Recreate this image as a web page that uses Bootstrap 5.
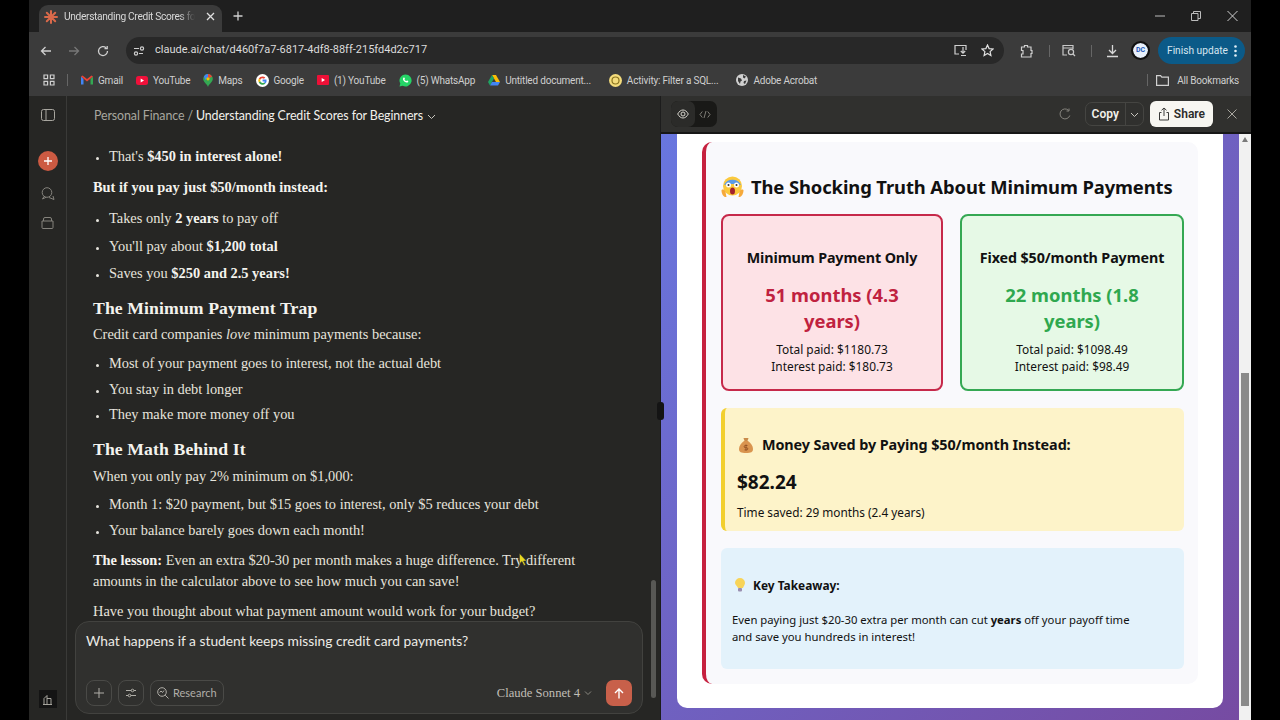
<!DOCTYPE html>
<html lang="en">
<head>
    <meta charset="UTF-8">
    <title>Understanding Credit Scores for Beginners</title>
    <link href="https://cdn.jsdelivr.net/npm/bootstrap@5.3.0/dist/css/bootstrap.min.css" rel="stylesheet">
    <style>
        html, body { height: 720px; overflow: hidden; background: #000; }
        .browser-win { width: 1222px; height: 720px; margin-left: 29px; background: #3b3b3b; font-family: Roboto, sans-serif; position: relative; }
        svg { display: block; flex: none; }

        .tab-strip { height: 32px; background: #1f1f1f; padding-left: 10px; }
        .tab-active { width: 183px; height: 27px; margin-top: 5px; background: #3b3b3b; border-radius: 9px 9px 0 0; padding: 0 7px 4px 5px; color: #d8d8d8; font-size: 10.2px; letter-spacing: -.33px; }
        .tab-title { width: 131px; margin-left: 6px; white-space: nowrap; -webkit-mask-image: linear-gradient(90deg, #000 88%, transparent); mask-image: linear-gradient(90deg, #000 88%, transparent); }
        .win-btns { gap: 26px; padding-right: 13px; }

        .tool-bar { height: 36px; background: #3b3b3b; padding: 1px 6px 0 11px; }
        .omni-box { width: 878px; height: 27px; margin-left: 17px; background: #282828; border-radius: 14px; padding: 0 10px 0 7px; color: #dcdcdc; font-size: 11px; }
        .omni-url { margin-left: 10px; }
        .update-pill { width: 87px; height: 27px; margin-left: 10px; background: #0b5a88; border-radius: 14px; color: #d7e6f0; font-size: 10.2px; padding-left: 9px; }
        .avatar-dc { width: 15px; height: 15px; margin-left: 14px; border-radius: 50%; background: #e8f0fb; color: #1a56b8; font-size: 7px; font-weight: 700; outline: 2px solid #111; }
        .tool-sep { width: 1px; height: 12px; background: #666; }
        .tb-12 { margin-left: 12px; }
        .tb-13 { margin-left: 13px; }
        .tb-14 { margin-left: 14px; }
        .tb-15 { margin-left: 15px; }
        .tb-17 { margin-left: 17px; }

        .mark-bar { height: 28px; background: #3b3b3b; padding: 0 0 4px 14px; color: #cfcfcf; font-size: 10px; letter-spacing: -.2px; }
        .mark-sep { margin: 0 13px 0 12px; }
        .mark-item { white-space: nowrap; gap: 5px; }
        .mark-item + .mark-item { margin-left: 13px; }
        .mark-item + .mark-far { margin-left: 18px; }
        .mark-end { padding-right: 12px; }

        .app-body { height: 624px; }
        .side-rail { width: 38px; background: #262624; border-right: 1px solid #3a3a38; padding-top: 13px; }
        .new-chat { width: 20px; height: 20px; border-radius: 50%; background: #cc5a42; margin-top: 30px; }
        .rail-foot { width: 18px; height: 18px; background: #141414; margin-top: auto; margin-bottom: 12px; }

        .chat-col { width: 593px; background: #262624; position: relative; }
        .chat-head { height: 38px; padding: 2px 0 0 27px; font-size: 12.4px; color: #f2f1ec; font-family: Lato, sans-serif; letter-spacing: -.1px; }
        .crumb-dim { color: #a8a69f; }
        .crumb-slash { margin: 0 3px; }
        .chat-text { height: 487px; overflow: hidden; padding: 12px 0 0 26px; color: #e6e4dd; font-family: "Liberation Serif", serif; font-size: 14.4px; line-height: 20px; }
        .chat-text p, .chat-text ul { margin: 0; }
        .chat-text b { color: #f4f3ee; }
        .chat-text ul { padding-left: 16px; }
        .chat-text li::marker { font-size: 11px; }
        .chat-text li + li { margin-top: 7.5px; }
        .chat-text ul.tight li + li { margin-top: 5.5px; }
        .chat-text h3 { font-family: "Liberation Serif", serif; font-size: 17.7px; font-weight: 700; line-height: 24px; margin: 13px 0 4px; color: #f4f3ee; letter-spacing: .1px; }
        .gap-a { margin-top: 11px !important; }
        .gap-b { margin-top: 9px !important; }
        .gap-c { margin-top: 8px !important; }
        .gap-d { margin-top: 10px !important; }
        .gap-e { margin-top: 5px !important; }
        .two-line { line-height: 21px; }
        .chat-bar { position: absolute; left: 584px; top: 484px; width: 5px; height: 118px; background: #585855; border-radius: 3px; }
        .prompt-box { width: 568px; height: 93px; margin-left: 8px; background: #30302e; border: 1px solid #42423f; border-radius: 14px; padding: 9px 10px 7px 10px; color: #ecebe6; font-family: Lato, sans-serif; font-size: 13.8px; }
        .prompt-tools { gap: 6px; }
        .mini-btn { height: 26px; border: 1px solid #4a4a47; border-radius: 8px; color: #b0aea8; font-size: 11px; padding: 0 6px; }
        .send-btn { width: 26px; height: 26px; background: #c8604a; border-radius: 7px; }
        .model-pick { color: #c0beb6; font-family: "Liberation Serif", serif; font-size: 12.6px; margin-right: 8px; }

        .art-col { width: 591px; border-left: 1px solid #1c1c1c; }
        .art-head { height: 38px; background: #30302e; border-bottom: 2px solid #171717; padding: 0 14px 0 10px; color: #f0efea; font-size: 12px; font-weight: 600; }
        .view-switch { width: 46px; height: 26px; background: #191917; border-radius: 7px; }
        .view-on { width: 24px; height: 26px; background: #2b2b29; border-radius: 7px; }
        .copy-split { height: 24px; border: 1px solid #454542; border-radius: 7px; }
        .copy-part { padding: 0 6px; height: 100%; border-right: 1px solid #454542; }
        .share-btn { height: 26px; background: #f7f6f1; color: #2b2b29; border-radius: 6px; padding: 0 8px; margin-left: 6px; }

        .art-view { height: 586px; }
        .art-scroll { width: 578px; background: linear-gradient(135deg, #667eea, #764ba2); background-size: 100% 135%; background-position: bottom; padding: 0 16px 12px 16px; }
        .white-sheet { height: 574px; background: #fff; border-radius: 0 0 10px 10px; padding: 8px 25px 24px 25px; font-family: "Noto Sans", sans-serif; color: #111; }
        .truth-box { height: 542px; background: #f9f9fc; border-left: 4px solid #c6213f; border-radius: 10px; padding: 31px 14px 0 15px; }
        .truth-title { font-size: 18.4px; font-weight: 700; line-height: 28px; margin: 0 0 13px; gap: 7px; letter-spacing: -.1px; white-space: nowrap; }
        .pay-grid { gap: 17px; }
        .pay-card { height: 177px; border: 2px solid; border-radius: 8px; padding-top: 32px; font-size: 11.9px; line-height: 17px; text-align: center; }
        .pay-red { width: 222px; background: #fde2e6; border-color: #c6294a; }
        .pay-green { width: 224px; background: #e6f9e6; border-color: #35a853; }
        .pay-name { font-size: 14.3px; font-weight: 700; line-height: 20px; margin-bottom: 14px; letter-spacing: -.1px; }
        .pay-big { font-size: 18.4px; font-weight: 700; line-height: 26px; margin-bottom: 7px; padding: 0 20px; }
        .red-txt { color: #c0223f; }
        .green-txt { color: #2fa84f; }
        .saved-box { height: 123px; margin-top: 17px; background: #fdf3c9; border-left: 4px solid #f2cf2e; border-radius: 6px; padding: 26px 0 0 12px; font-size: 11.8px; }
        .saved-head { font-size: 14.4px; font-weight: 700; line-height: 22px; gap: 9px; margin: 0 0 13px 2px; letter-spacing: -.1px; }
        .saved-sum { font-size: 19px; font-weight: 700; line-height: 26px; margin-bottom: 9px; }
        .take-box { height: 121px; margin-top: 17px; background: #e3f2fb; border-radius: 6px; padding: 27px 40px 0 11px; font-size: 11.3px; line-height: 17px; }
        .take-head { font-size: 11.9px; font-weight: 700; line-height: 20px; gap: 8px; margin: 0 0 16px 3px; }
        .art-track { width: 12px; background: #f1f1f1; padding: 0 2px; }
        .art-thumb { height: 333px; margin-top: 231px; background: #8a8a8a; }
        .art-up { margin: 3px 0 0 1px; width: 0; height: 0; border: 3.5px solid transparent; border-top: 0; border-bottom: 5px solid #7a7a7a; }
        .pane-grip { position: absolute; left: 628px; top: 402px; width: 7px; height: 18px; background: #141414; border-radius: 3px; }
        .mouse-arrow { position: absolute; left: 490px; top: 553px; }
    </style>
</head>
<body>
<div class="browser-win d-flex flex-column">

    <div class="tab-strip d-flex align-items-start">
        <div class="tab-active d-flex align-items-center">
            <svg width="14" height="14" viewBox="0 0 14 14" stroke="#d9694a" stroke-width="2" stroke-linecap="round"><path d="M7 1v12M1 7h12M2.8 2.8l8.4 8.4M11.2 2.8l-8.4 8.4"/></svg>
            <span class="tab-title">Understanding Credit Scores fo</span>
            <svg class="ms-auto" width="9" height="9" viewBox="0 0 9 9" stroke="#e0e0e0" stroke-width="1.3"><path d="M1 1l7 7M8 1l-7 7"/></svg>
        </div>
        <svg class="ms-2 mt-2" width="16" height="16" viewBox="0 0 16 16" stroke="#d0d0d0" stroke-width="1.3"><path d="M8 3.5v9M3.5 8h9"/></svg>
        <div class="win-btns d-flex align-items-center ms-auto mt-2">
            <svg width="10" height="16" viewBox="0 0 10 16" stroke="#bdbdbd"><path d="M0 8h10"/></svg>
            <svg width="10" height="16" viewBox="0 0 10 16" fill="none" stroke="#bdbdbd"><path d="M.5 5.5H7v7H.5zM2.5 5.5v-2h7v7H7"/></svg>
            <svg width="11" height="16" viewBox="0 0 11 16" stroke="#d0d0d0"><path d="M.5 3l10 10M10.5 3L.5 13"/></svg>
        </div>
    </div>

    <div class="tool-bar d-flex align-items-center">
        <svg width="12" height="12" viewBox="0 0 12 12" fill="none" stroke="#d0d0d0" stroke-width="1.3"><path d="M11 6H1.5M5.5 2l-4 4 4 4"/></svg>
        <svg class="ms-3" width="12" height="12" viewBox="0 0 12 12" fill="none" stroke="#777" stroke-width="1.3"><path d="M1 6h9.5M6.500 2l4 4-4 4"/></svg>
        <svg class="tb-17" width="12" height="12" viewBox="0 0 12 12" fill="none" stroke="#d0d0d0" stroke-width="1.3"><path d="M10.500 6A4.500 4.500 0 1 1 9 2.700M10.200 1v2.700H7.500"/></svg>
        <div class="omni-box d-flex align-items-center">
            <svg width="12" height="12" viewBox="0 0 12 12" fill="none" stroke="#cfcfcf" stroke-width="1.2"><path d="M1 3.500h5M10 8.500H6"/><circle cx="9" cy="3.500" r="1.600"/><circle cx="3" cy="8.500" r="1.600"/></svg>
            <span class="omni-url">claude.ai/chat/d460f7a7-6817-4df8-88ff-215fd4d2c717</span>
            <svg class="ms-auto" width="14" height="13" viewBox="0 0 14 13" fill="none" stroke="#d0d0d0" stroke-width="1.2"><path d="M5 10H1V1.500h11V6M9 3v6M6.800 7L9 9.200 11.200 7M7 11.500h5"/></svg>
            <svg class="tb-13" width="13" height="13" viewBox="0 0 13 13" fill="none" stroke="#e0e0e0" stroke-width="1.2"><path d="M6.500 1l1.600 3.600 3.900.4-2.900 2.600.8 3.900-3.400-2-3.400 2 .8-3.900L1 5l3.900-.4z"/></svg>
        </div>
        <svg class="ms-3" width="13" height="14" viewBox="0 0 13 14" fill="none" stroke="#d0d0d0" stroke-width="1.2"><path d="M1.500 3h3V1.500h3V3h3.500v3.500H12v3h-1V13H1.500v-3H3V6.500H1.500z"/></svg>
        <span class="tool-sep ms-3"></span>
        <svg class="tb-12" width="14" height="13" viewBox="0 0 14 13" fill="none" stroke="#c8c8c8" stroke-width="1.2"><path d="M5 11H1V1.500h10V5M1 4h10"/><circle cx="9" cy="8" r="2.600"/><path d="M11 10l2 2"/></svg>
        <span class="tool-sep tb-15"></span>
        <svg class="tb-14" width="13" height="14" viewBox="0 0 13 14" fill="none" stroke="#d8d8d8" stroke-width="1.3"><path d="M6.500 1v8M3 6l3.500 3.500L10 6M1 12.500h11"/></svg>
        <span class="avatar-dc d-flex align-items-center justify-content-center">DC</span>
        <div class="update-pill d-flex align-items-center">Finish update
            <svg class="ms-auto me-2" width="3" height="12" viewBox="0 0 3 12" fill="#e0eef6"><circle cx="1.500" cy="1.500" r="1.300"/><circle cx="1.500" cy="6" r="1.300"/><circle cx="1.500" cy="10.500" r="1.300"/></svg>
        </div>
    </div>

    <div class="mark-bar d-flex align-items-center">
        <svg width="12" height="12" viewBox="0 0 12 12" fill="none" stroke="#cfcfcf" stroke-width="1.2"><path d="M1 1h3.600v3.600H1zM7.400 1H11v3.600H7.400zM1 7.400h3.600V11H1zM7.400 7.400H11V11H7.400z"/></svg>
        <span class="tool-sep mark-sep"></span>
        <a class="mark-item d-flex align-items-center text-reset text-decoration-none">
            <svg width="12" height="10" viewBox="0 0 12 10"><path d="M0 1.500v8h2.500V4z" fill="#4285f4"/><path d="M12 1.500v8H9.500V4z" fill="#34a853"/><path d="M0 1.500L1.500.5 6 4 10.500.5 12 1.500 6 6.500z" fill="#ea4335"/></svg>Gmail</a>
        <a class="mark-item d-flex align-items-center text-reset text-decoration-none">
            <svg width="12" height="9" viewBox="0 0 12 9"><rect width="12" height="9" rx="2.500" fill="#f0103a"/><path d="M4.700 2.500L8 4.500 4.700 6.500z" fill="#fff"/></svg>YouTube</a>
        <a class="mark-item d-flex align-items-center text-reset text-decoration-none">
            <svg width="10" height="13" viewBox="0 0 10 13"><path d="M5 0a4.800 4.800 0 0 1 4.800 4.800C9.800 8 6 10 5 13 4 10 .2 8 .2 4.800A4.800 4.800 0 0 1 5 0z" fill="#34a853"/><path d="M1 2.200A4.800 4.800 0 0 1 5 0v3.200L2.200 6z" fill="#4285f4"/><path d="M5 0a4.800 4.800 0 0 1 4.200 2.500L6.600 4 5 3z" fill="#ea4335"/><circle cx="5" cy="4.800" r="1.600" fill="#fbbc04"/></svg>Maps</a>
        <a class="mark-item d-flex align-items-center text-reset text-decoration-none">
            <svg width="13" height="13" viewBox="0 0 13 13"><circle cx="6.500" cy="6.500" r="6.500" fill="#fff"/><path d="M6.500 2.400a4.100 4.100 0 0 1 2.800 1.100L8 4.800a2.300 2.300 0 0 0-3.700 1L2.800 4.600a4.100 4.100 0 0 1 3.700-2.200z" fill="#ea4335"/><path d="M2.800 4.600l1.500 1.200a2.400 2.400 0 0 0 0 1.500L2.800 8.500a4.100 4.100 0 0 1 0-3.900z" fill="#fbbc04"/><path d="M2.800 8.500l1.500-1.200A2.300 2.300 0 0 0 8 8.400l1.400 1.100a4.100 4.100 0 0 1-6.600-1z" fill="#34a853"/><path d="M10.500 5.600H6.600v1.800h2.200c-.1.400-.4.800-.8 1l1.400 1.100a4.200 4.200 0 0 0 1.100-3.900z" fill="#4285f4"/></svg>Google</a>
        <a class="mark-item d-flex align-items-center text-reset text-decoration-none">
            <svg width="12" height="10" viewBox="0 0 12 10"><rect width="12" height="10" rx="1" fill="#ee1037"/><path d="M4.700 3L8 5 4.700 7z" fill="#fff"/></svg>(1) YouTube</a>
        <a class="mark-item d-flex align-items-center text-reset text-decoration-none">
            <svg width="13" height="13" viewBox="0 0 13 13"><path d="M6.500.5a6 6 0 0 0-5.200 9L.5 12.500l3.100-.8A6 6 0 1 0 6.500.5z" fill="#25d366"/><path d="M4.600 3.600c.6-.5 1 0 1.300.9.1.4-.5.7-.4 1 .3.7.9 1.300 1.700 1.600.4.100.6-.6 1-.5.9.3 1.400.7.9 1.400-.5.600-1.300.7-2.400.2C5.200 7.600 4.300 6.500 4 5.400c-.1-.7.200-1.400.6-1.800z" fill="#fff"/></svg>(5) WhatsApp</a>
        <a class="mark-item d-flex align-items-center text-reset text-decoration-none">
            <svg width="12" height="11" viewBox="0 0 12 11"><path d="M4 0h4l4 7H8z" fill="#fbbc04"/><path d="M4 0l2 3.500-4 7L0 7z" fill="#1fa463"/><path d="M2 10.500L4 7h8l-2 3.500z" fill="#4285f4"/></svg>Untitled document...</a>
        <a class="mark-item mark-far d-flex align-items-center text-reset text-decoration-none">
            <svg width="13" height="13" viewBox="0 0 13 13"><circle cx="6.500" cy="6.500" r="6.500" fill="#f4dc7c"/><circle cx="6.500" cy="6.500" r="3.500" fill="none" stroke="#8a7420" stroke-width="1.200"/></svg>Activity: Filter a SQL...</a>
        <a class="mark-item mark-far d-flex align-items-center text-reset text-decoration-none">
            <svg width="12" height="12" viewBox="0 0 12 12"><circle cx="6" cy="6" r="6" fill="#d0d0d0"/><path d="M2 3.500l3 1 1 2-1.500 1L4 10 2 7zM7 1l3 1.500-1.500 2L7 3.500zM8 7l2.500-.5L9 10 7.500 9z" fill="#3b3b3b"/></svg>Adobe Acrobat</a>
        <div class="mark-end d-flex align-items-center ms-auto">
            <span class="tool-sep me-2"></span>
            <svg width="13" height="11" viewBox="0 0 13 11" fill="none" stroke="#d0d0d0" stroke-width="1.200"><path d="M.6.600h4l1.200 1.500h6.600v8.300H.6z"/></svg>
            <span class="ms-2">All Bookmarks</span>
        </div>
    </div>

    <div class="app-body d-flex">
        <div class="side-rail d-flex flex-column align-items-center">
            <svg width="14" height="12" viewBox="0 0 14 12" fill="none" stroke="#a8a69f"><rect x=".5" y=".5" width="13" height="11" rx="2"/><path d="M5 .5v11"/></svg>
            <div class="new-chat d-flex align-items-center justify-content-center">
                <svg width="10" height="10" viewBox="0 0 10 10" stroke="#fff" stroke-width="1.300"><path d="M5 1v8M1 5h8"/></svg>
            </div>
            <svg class="mt-3" width="14" height="14" viewBox="0 0 14 14" fill="none" stroke="#85837d"><circle cx="6" cy="5.500" r="4.800"/><path d="M3 9.500L1.500 12 5 10.300M8 10.500l5 2-1-3.500"/></svg>
            <svg class="mt-3" width="13" height="12" viewBox="0 0 13 12" fill="none" stroke="#85837d"><path d="M1 4h11v6.500a1 1 0 0 1-1 1H2a1 1 0 0 1-1-1zM2.500 4V2A1.500 1.500 0 0 1 4 .5h5A1.500 1.500 0 0 1 10.500 2v2"/></svg>
            <div class="rail-foot d-flex align-items-center justify-content-center">
                <svg width="11" height="11" viewBox="0 0 11 11" fill="none" stroke="#b5b3ac" stroke-width=".9"><path d="M1 10.500h9M2 10.500v-6l3-3v9M5 4.500h4v6"/></svg>
            </div>
        </div>

        <div class="chat-col">
            <div class="chat-head d-flex align-items-center">
                <span class="crumb-dim">Personal Finance</span><span class="crumb-dim crumb-slash">/</span><span>Understanding Credit Scores for Beginners</span>
                <svg class="ms-1" width="9" height="9" viewBox="0 0 9 9" fill="none" stroke="#c8c6bf"><path d="M1 3l3.500 3.500L8 3"/></svg>
            </div>
            <div class="chat-text">
                <ul><li>That's <b>$450 in interest alone!</b></li></ul>
                <p class="gap-a"><b>But if you pay just $50/month instead:</b></p>
                <ul class="gap-a">
                    <li>Takes only <b>2 years</b> to pay off</li>
                    <li>You'll pay about <b>$1,200 total</b></li>
                    <li>Saves you <b>$250 and 2.5 years!</b></li>
                </ul>
                <h3>The Minimum Payment Trap</h3>
                <p>Credit card companies <i>love</i> minimum payments because:</p>
                <ul class="tight gap-b">
                    <li>Most of your payment goes to interest, not the actual debt</li>
                    <li>You stay in debt longer</li>
                    <li>They make more money off you</li>
                </ul>
                <h3>The Math Behind It</h3>
                <p class="gap-e">When you only pay 2% minimum on $1,000:</p>
                <ul class="tight gap-c">
                    <li>Month 1: $20 payment, but $15 goes to interest, only $5 reduces your debt</li>
                    <li>Your balance barely goes down each month!</li>
                </ul>
                <p class="gap-d two-line"><b>The lesson:</b> Even an extra $20-30 per month makes a huge difference. Try different<br>amounts in the calculator above to see how much you can save!</p>
                <p class="gap-b">Have you thought about what payment amount would work for your budget?</p>
            </div>
            <div class="prompt-box d-flex flex-column">
                <div>What happens if a student keeps missing credit card payments?</div>
                <div class="prompt-tools d-flex align-items-center mt-auto">
                    <div class="mini-btn d-flex align-items-center">
                        <svg width="12" height="12" viewBox="0 0 12 12" stroke="#b0aea8"><path d="M6 1v10M1 6h10"/></svg>
                    </div>
                    <div class="mini-btn d-flex align-items-center">
                        <svg width="12" height="12" viewBox="0 0 12 12" fill="none" stroke="#b0aea8"><path d="M1 3.500h10M1 8.500h10"/><circle cx="7.500" cy="3.500" r="1.300" fill="#30302e"/><circle cx="4.500" cy="8.500" r="1.300" fill="#30302e"/></svg>
                    </div>
                    <div class="mini-btn d-flex align-items-center gap-1">
                        <svg width="12" height="12" viewBox="0 0 12 12" fill="none" stroke="#b0aea8"><circle cx="5" cy="5" r="4.300"/><path d="M8.200 8.200l3.300 3.300M2.700 5.500L4 4l1.500 1.500L7 3.500"/></svg>Research
                    </div>
                    <div class="model-pick d-flex align-items-center gap-1 ms-auto">Claude Sonnet 4
                        <svg width="8" height="8" viewBox="0 0 8 8" fill="none" stroke="#8a8880"><path d="M1 2.500l3 3 3-3"/></svg>
                    </div>
                    <div class="send-btn d-flex align-items-center justify-content-center">
                        <svg width="10" height="11" viewBox="0 0 10 11" fill="none" stroke="#fff" stroke-width="1.400"><path d="M5 10.500V1M1 5l4-4 4 4"/></svg>
                    </div>
                </div>
            </div>
            <span class="chat-bar"></span>
        </div>

        <div class="art-col d-flex flex-column">
            <div class="art-head d-flex align-items-center">
                <div class="view-switch d-flex align-items-center">
                    <div class="view-on d-flex align-items-center justify-content-center">
                        <svg width="12" height="10" viewBox="0 0 12 10" fill="none" stroke="#d8d6cf"><path d="M.7 5C2 2.500 4 1 6 1s4 1.500 5.300 4C10 7.500 8 9 6 9S2 7.500.7 5z"/><circle cx="6" cy="5" r="2"/></svg>
                    </div>
                    <svg class="ms-1" width="12" height="9" viewBox="0 0 12 9" fill="none" stroke="#8a8880" stroke-width=".9"><path d="M3.300 1.500L1 4.500l2.300 3M8.700 1.500l2.300 3-2.300 3M7 1L5 8"/></svg>
                </div>
                <svg class="ms-auto" width="12" height="12" viewBox="0 0 12 12" fill="none" stroke="#85837d"><path d="M10.800 7.500A5 5 0 1 1 9.500 2.300M10 .5V3H7.500"/></svg>
                <div class="copy-split d-flex align-items-center tb-14">
                    <span class="copy-part d-flex align-items-center">Copy</span>
                    <svg class="mx-1" width="9" height="9" viewBox="0 0 9 9" fill="none" stroke="#c8c6bf"><path d="M1 3l3.500 3.500L8 3"/></svg>
                </div>
                <div class="share-btn d-flex align-items-center gap-1">
                    <svg width="12" height="14" viewBox="0 0 12 14" fill="none" stroke="#3a3a38"><path d="M3.500 5.500h-2V13h9V5.500h-2M6 9V1M3.500 3.300L6 1l2.500 2.300"/></svg>Share
                </div>
                <svg class="tb-14" width="10" height="10" viewBox="0 0 10 10" stroke="#a8a69f"><path d="M.5.500l9 9M9.500.500l-9 9"/></svg>
            </div>
            <div class="art-view d-flex">
                <div class="art-scroll">
                    <div class="white-sheet">
                        <div class="truth-box">
                            <h2 class="truth-title d-flex align-items-center">
                                <svg width="23" height="22" viewBox="0 0 23 22"><circle cx="11.500" cy="10" r="9.500" fill="#fbc93d"/><path d="M3 9a9.500 9.500 0 0 1 17 0c-2-1.500-15-1.500-17 0z" fill="#5b9be8"/><circle cx="7.500" cy="9" r="2.500" fill="#fff"/><circle cx="15.500" cy="9" r="2.500" fill="#fff"/><circle cx="7.500" cy="9" r="1" fill="#333"/><circle cx="15.500" cy="9" r="1" fill="#333"/><ellipse cx="11.500" cy="15" rx="2.500" ry="3.500" fill="#a3222c"/><path d="M.5 14c2-1 3.500 0 4 2l1 5c-3 .5-5-3-5-7zM22.500 14c-2-1-3.500 0-4 2l-1 5c3 .5 5-3 5-7z" fill="#f6a93b"/></svg>
                                The Shocking Truth About Minimum Payments
                            </h2>
                            <div class="pay-grid d-flex">
                                <div class="pay-card pay-red">
                                    <div class="pay-name">Minimum Payment Only</div>
                                    <div class="pay-big red-txt">51 months (4.3 years)</div>
                                    <div>Total paid: $1180.73<br>Interest paid: $180.73</div>
                                </div>
                                <div class="pay-card pay-green">
                                    <div class="pay-name">Fixed $50/month Payment</div>
                                    <div class="pay-big green-txt">22 months (1.8 years)</div>
                                    <div>Total paid: $1098.49<br>Interest paid: $98.49</div>
                                </div>
                            </div>
                            <div class="saved-box">
                                <div class="saved-head d-flex align-items-center">
                                    <svg width="14" height="16" viewBox="0 0 14 16"><path d="M4.500 1h5l-1 3h-3z" fill="#c98a4a"/><path d="M5 4h4c3 2 5 5 5 8 0 3-2 4-7 4s-7-1-7-4c0-3 2-6 5-8z" fill="#d9944f"/><path d="M7 7.500v6M8.500 8.500H6.300a1 1 0 0 0 0 2.200h1.400a1 1 0 0 1 0 2.200H5.500" fill="none" stroke="#8a4a1e" stroke-width=".8"/></svg>
                                    Money Saved by Paying $50/month Instead:
                                </div>
                                <div class="saved-sum">$82.24</div>
                                <div>Time saved: 29 months (2.4 years)</div>
                            </div>
                            <div class="take-box">
                                <div class="take-head d-flex align-items-center">
                                    <svg width="10" height="14" viewBox="0 0 10 14"><path d="M5 0a5 5 0 0 1 5 5c0 2-1.500 3-2 5H3C2.500 8 0 7 0 5a5 5 0 0 1 5-5z" fill="#f8d458"/><rect x="3" y="10" width="4" height="3.500" rx="1" fill="#9a8fb0"/></svg>
                                    Key Takeaway:
                                </div>
                                <div>Even paying just $20-30 extra per month can cut <b>years</b> off your payoff time and save you hundreds in interest!</div>
                            </div>
                        </div>
                    </div>
                </div>
                <div class="art-track">
                    <div class="art-up"></div>
                    <div class="art-thumb"></div>
                </div>
            </div>
        </div>
    </div>

    <span class="pane-grip"></span>
    <svg class="mouse-arrow" width="8" height="13" viewBox="0 0 8 13"><path d="M.5.500v10l2.500-2 2 4 1.500-.8-2-3.700h3z" fill="#e8d820" stroke="#333" stroke-width=".5"/></svg>
</div>
<script src="https://cdn.jsdelivr.net/npm/bootstrap@5.3.0/dist/js/bootstrap.bundle.min.js"></script>
</body>
</html>
